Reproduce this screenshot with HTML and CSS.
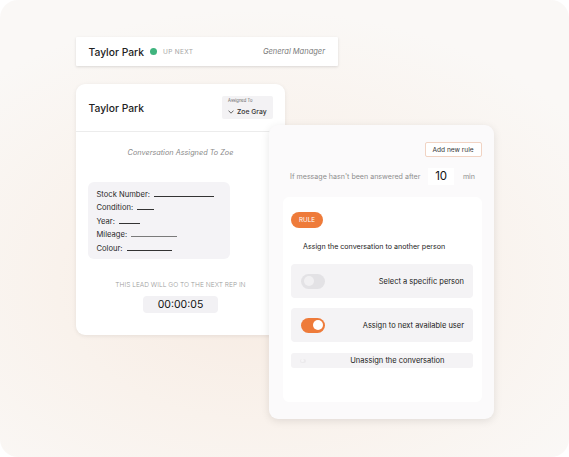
FILE: index.html
```html
<!DOCTYPE html>
<html lang="en">
<head>
    <meta charset="UTF-8">
    <meta name="viewport" content="width=device-width, initial-scale=1.0">
    <title>Lead Routing</title>
    <link rel="stylesheet" href="styles.css">
</head>
<body>
    <div class="frame">
        <div class="up-next">
            <span class="name">Taylor Park</span>
            <span class="dot"></span>
            <span class="up-label">UP NEXT</span>
            <span class="role">General Manager</span>
        </div>

        <div class="cards">
            <div class="lead-card">
                <div class="lead-header">
                    <span class="lead-name">Taylor Park</span>
                    <div class="assigned">
                        <div class="assigned-label">Assigned To</div>
                        <div class="assigned-value">
                            <svg class="chevron" width="6" height="4" viewBox="0 0 6 4"><path d="M0.5 0.6 L3 3.2 L5.5 0.6" fill="none" stroke="#444" stroke-width="0.8"/></svg>
                            Zoe Gray
                        </div>
                    </div>
                </div>
                <div class="assigned-note">Conversation Assigned To Zoe</div>
                <div class="details">
                    <div>Stock Number: <span class="blank" style="width: 60px"></span></div>
                    <div>Condition: <span class="blank" style="width: 17px"></span></div>
                    <div>Year: <span class="blank" style="width: 21px"></span></div>
                    <div>Mileage: <span class="blank grey" style="width: 46px"></span></div>
                    <div>Colour: <span class="blank" style="width: 45px"></span></div>
                </div>
                <div class="countdown-label">THIS LEAD WILL GO TO THE NEXT REP IN</div>
                <div class="countdown">00:00:05</div>
            </div>

            <div class="rules-card">
                <div class="rules-top">
                    <button class="add-rule">Add new rule</button>
                </div>
                <div class="timeout">
                    <span>If message hasn't been answered after</span>
                    <span class="minutes">10</span>
                    <span class="unit">min</span>
                </div>
                <div class="rule-panel">
                    <div class="rule-pill">RULE</div>
                    <div class="rule-title">Assign the conversation to another person</div>
                    <div class="option">
                        <span class="toggle"></span>
                        <span>Select a specific person</span>
                    </div>
                    <div class="option">
                        <span class="toggle on"></span>
                        <span>Assign to next available user</span>
                    </div>
                    <div class="option small">
                        <span class="toggle tiny"></span>
                        <span>Unassign the conversation</span>
                    </div>
                </div>
            </div>
        </div>
    </div>
</body>
</html>
```

FILE: styles.css
```css
* {
    margin: 0;
    padding: 0;
    box-sizing: border-box;
}

body {
    font-family: Inter, "Noto Sans", Arial, sans-serif;
    background-color: #ffffff;
    color: #222;
}

.frame {
    width: 569px;
    height: 457px;
    border-radius: 18px;
    padding: 37px 0 0 76px;
    background: radial-gradient(ellipse 70% 60% at 45% 62%, #f7ebe2 0%, #f9f2ec 50%, #faf8f6 100%);
    overflow: hidden;
}

/* up next strip */
.up-next {
    width: 262px;
    height: 29px;
    display: flex;
    align-items: center;
    padding: 0 13px 0 12.5px;
    background-color: #fff;
    border-radius: 1px;
    box-shadow: 0 1px 3px rgba(0, 0, 0, 0.13);
}

.name {
    font-size: 10.3px;
    font-weight: 500;
}

.dot {
    width: 7px;
    height: 7px;
    border-radius: 50%;
    background-color: #3fb47e;
    margin-left: 6px;
}

.up-label {
    margin-left: 6px;
    font-size: 6.5px;
    letter-spacing: 0.35px;
    color: #a5a5a5;
}

.role {
    margin-left: auto;
    font-size: 7.5px;
    font-style: italic;
    color: #7a7a7a;
}

/* cards */
.cards {
    display: flex;
    align-items: flex-start;
    margin-top: 18px;
}

.lead-card {
    width: 209px;
    height: 251px;
    background-color: #fff;
    border-radius: 9px;
    box-shadow: 0 1px 4px rgba(0, 0, 0, 0.08);
}

.lead-header {
    height: 48px;
    display: flex;
    align-items: center;
    justify-content: space-between;
    padding: 0 12px 0 12.5px;
    border-bottom: 1px solid #ececec;
}

.lead-name {
    font-size: 10.3px;
    font-weight: 500;
}

.assigned {
    width: 51px;
    height: 23px;
    background-color: #f3f2f4;
    border-radius: 2px;
    padding: 2px 0 0 6px;
}

.assigned-label {
    font-size: 4.2px;
    color: #666;
    line-height: 6px;
}

.assigned-value {
    display: flex;
    align-items: center;
    margin-top: 3px;
    font-size: 6.8px;
    font-weight: 500;
    color: #333;
}

.chevron {
    margin-right: 3px;
}

.assigned-note {
    margin-top: 15.5px;
    text-align: center;
    font-size: 7.3px;
    font-style: italic;
    color: #8a8a8a;
    line-height: 9px;
}

.details {
    width: 142px;
    height: 77px;
    margin: 25px 0 0 12px;
    padding: 6px 0 0 8.5px;
    background-color: #f4f3f6;
    border-radius: 6px;
    font-size: 7.6px;
    line-height: 13.5px;
    color: #2a2a2a;
}

.blank {
    display: inline-block;
    height: 1px;
    margin-left: 2px;
    background-color: #333;
    vertical-align: baseline;
}

.blank.grey {
    background-color: #7a7a7a;
}

.countdown-label {
    margin-top: 22px;
    text-align: center;
    font-size: 6.6px;
    font-weight: 300;
    color: #9a9a9a;
    line-height: 9px;
}

.countdown {
    width: 75.5px;
    height: 17px;
    margin: 6.5px auto 0;
    background-color: #f2f1f4;
    border-radius: 4px;
    text-align: center;
    font-size: 10.5px;
    line-height: 17px;
    color: #111;
}

.rules-card {
    width: 225px;
    height: 294px;
    margin: 41px 0 0 -16px;
    padding: 17px 12.5px 0 14px;
    background-color: #fbfafb;
    border-radius: 9px;
    box-shadow: 0 2px 8px rgba(0, 0, 0, 0.1);
}

.rules-top {
    display: flex;
    justify-content: flex-end;
}

.add-rule {
    width: 57px;
    height: 15px;
    background-color: #fff;
    border: 1px solid #f1d3c3;
    border-radius: 2px;
    font-family: inherit;
    font-size: 6.6px;
    color: #333;
}

.timeout {
    display: flex;
    align-items: center;
    margin-top: 11px;
    padding-left: 7px;
    font-size: 7.1px;
    color: #8d8d8d;
}

.minutes {
    width: 25.5px;
    height: 17px;
    margin-left: 8px;
    background-color: #fff;
    text-align: center;
    font-size: 11.5px;
    line-height: 17px;
    color: #111;
}

.unit {
    margin-left: 9px;
}

.rule-panel {
    height: 205px;
    margin-top: 12px;
    padding: 15px 9px 0 8px;
    background-color: #fff;
    border-radius: 6px;
}

.rule-pill {
    width: 32px;
    height: 16px;
    border-radius: 8px;
    background-color: #ee7b3a;
    color: #fff;
    font-size: 6.2px;
    line-height: 16px;
    text-align: center;
}

.rule-title {
    margin: 13.5px 0 0 12px;
    font-size: 7.1px;
    line-height: 9px;
    color: #222;
}

.option {
    height: 34px;
    display: flex;
    align-items: center;
    justify-content: space-between;
    margin-top: 13.5px;
    padding: 0 8.5px 0 10px;
    background-color: #f4f3f5;
    border-radius: 4px;
    font-size: 7.5px;
    color: #1a1a1a;
}

.option + .option {
    margin-top: 10px;
}

.option.small {
    height: 15px;
    margin-top: 11px;
    padding: 0 28px 0 9px;
    border-radius: 3px;
}

.toggle {
    position: relative;
    width: 24px;
    height: 15px;
    border-radius: 8px;
    background-color: #e3e2e5;
}

.toggle::after {
    content: "";
    position: absolute;
    top: 2.5px;
    left: 3px;
    width: 10px;
    height: 10px;
    border-radius: 50%;
    background-color: #f1f0f2;
}

.toggle.on {
    background-color: #ee7b3a;
}

.toggle.on::after {
    left: 11.5px;
    background-color: #fff;
}

.toggle.tiny {
    width: 6px;
    height: 4px;
    border-radius: 2px;
    background-color: #ebeaec;
}

.toggle.tiny::after {
    top: 0.5px;
    left: 0.5px;
    width: 3px;
    height: 3px;
    background-color: #f6f5f7;
}
```
